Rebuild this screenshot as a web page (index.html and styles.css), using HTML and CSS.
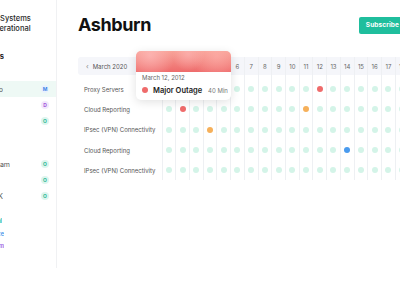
FILE: index.html
```html
<!DOCTYPE html>
<html lang="en">
<head>
<meta charset="utf-8">
<title>Ashburn status</title>
<link rel="stylesheet" href="styles.css">
</head>
<body>
<div class="app">
  <aside class="sidebar">
    <div class="brand">All Systems<br>Operational</div>
    <div class="heading"><span>Services</span></div>
    <div class="group group-first">
      <div class="item active"><span class="item-label end-3"><span>Video</span></span><span class="badge badge-m">M</span></div>
      <div class="item"><span class="item-label end-0"><span>Voice</span></span><span class="badge badge-d">D</span></div>
      <div class="item"><span class="item-label end-0"><span>Chat</span></span><span class="badge badge-o">O</span></div>
    </div>
    <div class="group group-second">
      <div class="item"><span class="item-label end-10"><span>Live Stream</span></span><span class="badge badge-o">O</span></div>
      <div class="item"><span class="item-label end-0"><span>API</span></span><span class="badge badge-o">O</span></div>
      <div class="item"><span class="item-label end-3"><span>SDK</span></span><span class="badge badge-o">O</span></div>
    </div>
    <div class="legend">
      <div class="legend-item"><span class="legend-label end-2 c-teal"><span>Operational</span></span></div>
      <div class="legend-item"><span class="legend-label end-4 c-blue"><span>Maintenance</span></span></div>
      <div class="legend-item"><span class="legend-label end-4 c-purple"><span>Degraded System</span></span></div>
    </div>
  </aside>

  <main class="main">
    <header class="top">
      <h1 class="title">Ashburn</h1>
      <button class="subscribe">Subscribe</button>
    </header>

    <section class="board">
      <div class="grid">
        <div class="col col-labels">
          <div class="head"><span class="chev">‹</span>March 2020</div>
          <div class="body">
            <div class="cell label">Proxy Servers</div>
            <div class="cell label">Cloud Reporting</div>
            <div class="cell label">IPsec (VPN) Connectivity</div>
            <div class="cell label">Cloud Reporting</div>
            <div class="cell label">IPsec (VPN) Connectivity</div>
          </div>
        </div>

        <div class="col day"><div class="head">1</div><div class="body">
          <div class="cell"><i class="dot"></i></div><div class="cell"><i class="dot"></i></div><div class="cell"><i class="dot"></i></div><div class="cell"><i class="dot"></i></div><div class="cell"><i class="dot"></i></div>
        </div></div>
        <div class="col day"><div class="head">2</div><div class="body">
          <div class="cell"><i class="dot"></i></div><div class="cell"><i class="dot red"></i></div><div class="cell"><i class="dot"></i></div><div class="cell"><i class="dot"></i></div><div class="cell"><i class="dot"></i></div>
        </div></div>
        <div class="col day"><div class="head">3</div><div class="body">
          <div class="cell"><i class="dot"></i></div><div class="cell"><i class="dot"></i></div><div class="cell"><i class="dot"></i></div><div class="cell"><i class="dot"></i></div><div class="cell"><i class="dot"></i></div>
        </div></div>
        <div class="col day"><div class="head">4</div><div class="body">
          <div class="cell"><i class="dot"></i></div><div class="cell"><i class="dot"></i></div><div class="cell"><i class="dot orange"></i></div><div class="cell"><i class="dot"></i></div><div class="cell"><i class="dot"></i></div>
        </div></div>
        <div class="col day"><div class="head">5</div><div class="body">
          <div class="cell"><i class="dot"></i></div><div class="cell"><i class="dot"></i></div><div class="cell"><i class="dot"></i></div><div class="cell"><i class="dot"></i></div><div class="cell"><i class="dot"></i></div>
        </div></div>
        <div class="col day"><div class="head">6</div><div class="body">
          <div class="cell"><i class="dot"></i></div><div class="cell"><i class="dot"></i></div><div class="cell"><i class="dot"></i></div><div class="cell"><i class="dot"></i></div><div class="cell"><i class="dot"></i></div>
        </div></div>
        <div class="col day"><div class="head">7</div><div class="body">
          <div class="cell"><i class="dot"></i></div><div class="cell"><i class="dot"></i></div><div class="cell"><i class="dot"></i></div><div class="cell"><i class="dot"></i></div><div class="cell"><i class="dot"></i></div>
        </div></div>
        <div class="col day"><div class="head">8</div><div class="body">
          <div class="cell"><i class="dot"></i></div><div class="cell"><i class="dot"></i></div><div class="cell"><i class="dot"></i></div><div class="cell"><i class="dot"></i></div><div class="cell"><i class="dot"></i></div>
        </div></div>
        <div class="col day"><div class="head">9</div><div class="body">
          <div class="cell"><i class="dot"></i></div><div class="cell"><i class="dot"></i></div><div class="cell"><i class="dot"></i></div><div class="cell"><i class="dot"></i></div><div class="cell"><i class="dot"></i></div>
        </div></div>
        <div class="col day"><div class="head">10</div><div class="body">
          <div class="cell"><i class="dot"></i></div><div class="cell"><i class="dot"></i></div><div class="cell"><i class="dot"></i></div><div class="cell"><i class="dot"></i></div><div class="cell"><i class="dot"></i></div>
        </div></div>
        <div class="col day"><div class="head">11</div><div class="body">
          <div class="cell"><i class="dot"></i></div><div class="cell"><i class="dot orange"></i></div><div class="cell"><i class="dot"></i></div><div class="cell"><i class="dot"></i></div><div class="cell"><i class="dot"></i></div>
        </div></div>
        <div class="col day"><div class="head">12</div><div class="body">
          <div class="cell"><i class="dot red"></i></div><div class="cell"><i class="dot"></i></div><div class="cell"><i class="dot"></i></div><div class="cell"><i class="dot"></i></div><div class="cell"><i class="dot"></i></div>
        </div></div>
        <div class="col day"><div class="head">13</div><div class="body">
          <div class="cell"><i class="dot"></i></div><div class="cell"><i class="dot"></i></div><div class="cell"><i class="dot"></i></div><div class="cell"><i class="dot"></i></div><div class="cell"><i class="dot"></i></div>
        </div></div>
        <div class="col day"><div class="head">14</div><div class="body">
          <div class="cell"><i class="dot"></i></div><div class="cell"><i class="dot"></i></div><div class="cell"><i class="dot"></i></div><div class="cell"><i class="dot blue"></i></div><div class="cell"><i class="dot"></i></div>
        </div></div>
        <div class="col day"><div class="head">15</div><div class="body">
          <div class="cell"><i class="dot"></i></div><div class="cell"><i class="dot"></i></div><div class="cell"><i class="dot"></i></div><div class="cell"><i class="dot"></i></div><div class="cell"><i class="dot"></i></div>
        </div></div>
        <div class="col day"><div class="head">16</div><div class="body">
          <div class="cell"><i class="dot"></i></div><div class="cell"><i class="dot"></i></div><div class="cell"><i class="dot"></i></div><div class="cell"><i class="dot"></i></div><div class="cell"><i class="dot"></i></div>
        </div></div>
        <div class="col day"><div class="head">17</div><div class="body">
          <div class="cell"><i class="dot"></i></div><div class="cell"><i class="dot"></i></div><div class="cell"><i class="dot"></i></div><div class="cell"><i class="dot"></i></div><div class="cell"><i class="dot"></i></div>
        </div></div>
        <div class="col day"><div class="head">18</div><div class="body">
          <div class="cell"><i class="dot"></i></div><div class="cell"><i class="dot"></i></div><div class="cell"><i class="dot"></i></div><div class="cell"><i class="dot"></i></div><div class="cell"><i class="dot"></i></div>
        </div></div>
      </div>

      <div class="tip">
        <div class="tip-head"></div>
        <div class="tip-body">
          <div class="tip-date">March 12, 2012</div>
          <div class="tip-row">
            <i class="tip-dot"></i>
            <span class="tip-status">Major Outage</span>
            <span class="tip-dur">40 Min</span>
          </div>
        </div>
      </div>
    </section>
  </main>
</div>
</body>
</html>
```

FILE: styles.css
```css
* { box-sizing: border-box; margin: 0; padding: 0; }

html, body {
  width: 400px;
  height: 300px;
  overflow: hidden;
  background: #ffffff;
}

body {
  font-family: Inter, "Noto Sans", sans-serif;
  color: #333;
}

.app {
  display: flex;
  align-items: flex-start;
  width: 480px;
}

/* ---------- Sidebar ---------- */
.sidebar {
  flex: none;
  width: 57px;
  height: 268px;
  border-right: 1px solid #f0f1f3;
  overflow: hidden;
  padding-top: 14px;
}

.brand {
  margin-left: -11px;
  font-size: 7.5px;
  font-weight: 500;
  line-height: 9.5px;
  color: #2a2a2a;
  white-space: nowrap;
}

.heading {
  margin-top: 19px;
  width: 4px;
  height: 10px;
  line-height: 10px;
  font-size: 7.5px;
  font-weight: 700;
  color: #222;
  display: flex;
  justify-content: flex-end;
  overflow: hidden;
  white-space: nowrap;
}
.heading span { flex: none; }

.group-first { margin-top: 19px; }
.group-second { margin-top: 27px; }

.item {
  display: flex;
  align-items: center;
  height: 16px;
}
.item.active { background: #eef9f5; }

.item-label,
.legend-label {
  display: flex;
  justify-content: flex-end;
  overflow: hidden;
  white-space: nowrap;
}
.item-label span,
.legend-label span { flex: none; }

.item-label {
  font-size: 7px;
  color: #555;
}

.end-0 { width: 0; }
.end-2 { width: 2px; }
.end-3 { width: 3px; }
.end-4 { width: 4px; }
.end-10 { width: 10px; }

.badge {
  margin-left: auto;
  margin-right: 7px;
  width: 8px;
  height: 8px;
  border-radius: 50%;
  font-size: 5px;
  font-weight: 700;
  display: flex;
  align-items: center;
  justify-content: center;
  line-height: 1;
}
.badge-m { color: #3d87e6; background: #e9f2fd; }
.badge-d { color: #a257da; background: #f3e8fc; }
.badge-o { color: #2bb894; background: #ddf5ee; }

.legend { margin-top: 11px; }
.legend-item {
  height: 12.5px;
  display: flex;
  align-items: center;
}
.legend-label {
  font-size: 5.5px;
  font-weight: 600;
}
.c-teal { color: #21b39a; }
.c-blue { color: #3a8fe8; }
.c-purple { color: #9a57e0; }

/* ---------- Main ---------- */
.main {
  flex: none;
  width: 372px;
  padding: 14px 23px 0 21px;
}

.top {
  display: flex;
  align-items: center;
  justify-content: space-between;
  height: 22px;
}

.title {
  font-size: 18px;
  line-height: 22px;
  font-weight: 700;
  letter-spacing: -0.4px;
  color: #111;
}

.subscribe {
  flex: none;
  white-space: nowrap;
  height: 17px;
  padding: 0 7px;
  border: none;
  border-radius: 2px;
  background: #1fbe9d;
  color: #fff;
  font-family: inherit;
  font-size: 6.5px;
  font-weight: 700;
  letter-spacing: 0.1px;
}

.board {
  position: relative;
  margin-top: 21px;
}

.grid {
  display: flex;
}

.col { flex: none; }
.col-labels { width: 83.5px; }
.day {
  width: 13.73px;
  border-left: 1px solid #eef0f3;
}

.head {
  height: 18px;
  background: #f5f6fa;
  display: flex;
  align-items: center;
  justify-content: center;
  font-size: 6px;
  color: #666;
}
.col-labels .head {
  justify-content: flex-start;
  padding-left: 8px;
  border-radius: 3px 0 0 3px;
  color: #555;
}
.chev {
  font-size: 7px;
  margin-right: 4px;
  color: #888;
}

.body { padding-top: 4px; }

.cell {
  height: 20.3px;
  display: flex;
  align-items: center;
  justify-content: center;
}
.label {
  justify-content: flex-start;
  padding-left: 6px;
  font-size: 6px;
  color: #555;
  white-space: nowrap;
}

.dot {
  display: block;
  width: 6px;
  height: 6px;
  border-radius: 50%;
  background: #d4f4e8;
}
.dot.red { background: #ef6b6b; }
.dot.orange { background: #f6b05a; }
.dot.blue { background: #4a9bee; }

/* ---------- Tooltip ---------- */
.tip {
  position: absolute;
  left: 58px;
  top: -6px;
  width: 95px;
  height: 49px;
  background: #fff;
  border-radius: 5px;
  box-shadow: 0 2px 10px rgba(0, 0, 0, 0.12);
  overflow: hidden;
}
.tip-head {
  height: 21px;
  background:
    radial-gradient(circle at 15% 20%, rgba(255, 190, 190, 0.7), rgba(255, 190, 190, 0) 30%),
    radial-gradient(circle at 55% 15%, rgba(255, 185, 185, 0.6), rgba(255, 185, 185, 0) 30%),
    radial-gradient(circle at 85% 25%, rgba(255, 180, 175, 0.6), rgba(255, 180, 175, 0) 30%),
    linear-gradient(180deg, #f7a095, #ee6c6c);
}
.tip-body { padding: 2px 6px 0; }
.tip-date {
  font-size: 6px;
  line-height: 8px;
  color: #666;
  white-space: nowrap;
}
.tip-row {
  display: flex;
  align-items: center;
  height: 10px;
  margin-top: 3px;
  white-space: nowrap;
}
.tip-dot {
  flex: none;
  display: block;
  width: 6px;
  height: 6px;
  border-radius: 50%;
  background: #ef6b6b;
  margin-right: 5px;
}
.tip-status {
  flex: none;
  font-size: 7.5px;
  font-weight: 600;
  color: #222;
}
.tip-dur {
  flex: none;
  margin-left: 6px;
  font-size: 6px;
  color: #777;
}
```
